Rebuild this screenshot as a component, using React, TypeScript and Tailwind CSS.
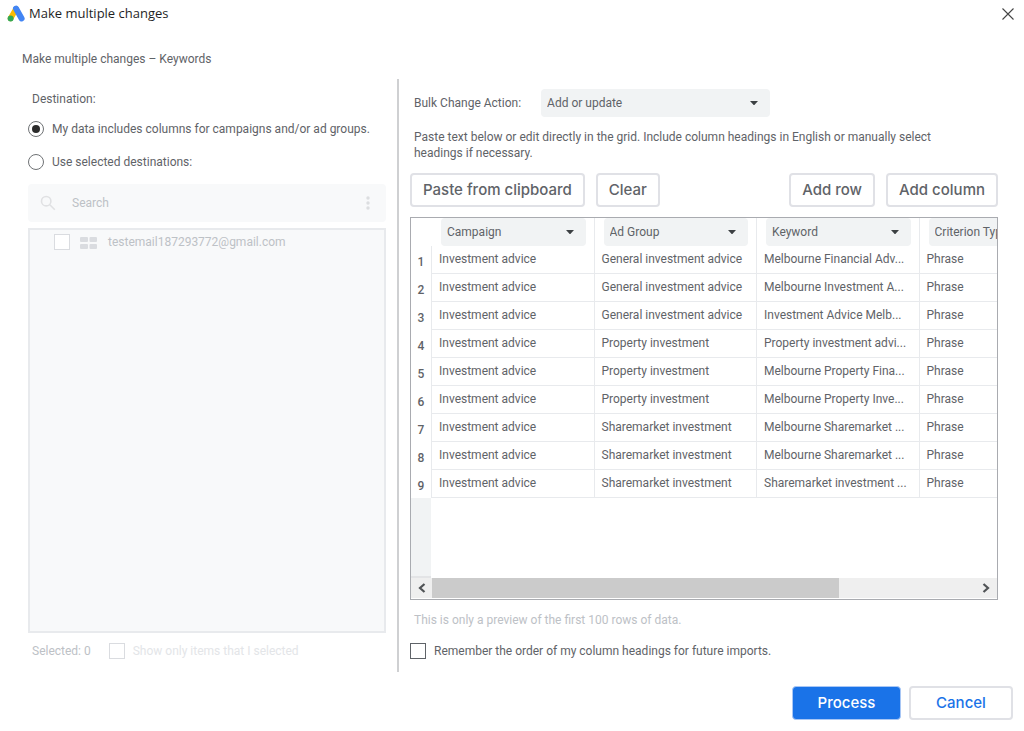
import { useState } from "react";

const COLUMNS = ["Campaign", "Ad Group", "Keyword", "Criterion Type"];

const ROWS = [
  ["Investment advice", "General investment advice", "Melbourne Financial Adv...", "Phrase"],
  ["Investment advice", "General investment advice", "Melbourne Investment A...", "Phrase"],
  ["Investment advice", "General investment advice", "Investment Advice Melb...", "Phrase"],
  ["Investment advice", "Property investment", "Property investment advi...", "Phrase"],
  ["Investment advice", "Property investment", "Melbourne Property Fina...", "Phrase"],
  ["Investment advice", "Property investment", "Melbourne Property Inve...", "Phrase"],
  ["Investment advice", "Sharemarket investment", "Melbourne Sharemarket ...", "Phrase"],
  ["Investment advice", "Sharemarket investment", "Melbourne Sharemarket ...", "Phrase"],
  ["Investment advice", "Sharemarket investment", "Sharemarket investment ...", "Phrase"],
];

const outlineButton =
  "h-[34px] rounded border-2 border-[#e0e1e6] bg-white px-[11px] font-[Inter,sans-serif] text-[15px] font-medium text-[#5f6368]";

const checkbox = "size-4 shrink-0 appearance-none border bg-white checked:bg-[#1a73e8]";

function AdsLogo() {
  return (
    <svg className="h-[18px] w-[18px]" viewBox="0 0 18 18" aria-hidden="true">
      <path d="M9 4 L3.6 13.4" stroke="#fbbc04" strokeWidth="5.6" strokeLinecap="round" />
      <path d="M9 3.6 L14.6 13.4" stroke="#4285f4" strokeWidth="6" strokeLinecap="round" />
      <circle cx="3.6" cy="13.6" r="3" fill="#34a853" />
    </svg>
  );
}

function Select({ label, id, options }: { label?: string; id?: string; options: string[] }) {
  return (
    <div className="relative w-full">
      <select
        id={id}
        aria-label={label}
        className="block h-7 w-full appearance-none rounded bg-[#f1f3f4] pl-1.5 pr-6 text-[#5f6368]"
      >
        {options.map((o) => (
          <option key={o}>{o}</option>
        ))}
      </select>
      <svg
        className="pointer-events-none absolute right-3 top-3 h-1 w-2"
        viewBox="0 0 8 4"
        fill="#3c4043"
        aria-hidden="true"
      >
        <path d="M0 0h8L4 4.4z" />
      </svg>
    </div>
  );
}

function Destination() {
  const [mode, setMode] = useState("data");
  const radio =
    "flex size-4 shrink-0 appearance-none items-center justify-center rounded-full border border-[#6f7275] bg-white before:size-2 before:rounded-full checked:before:bg-[#2b2b2b]";

  return (
    <section className="flex min-w-0 flex-col border-r-2 border-[#cfd0d2] pl-7 pr-[11px] pt-[10px] pb-[11px]">
      <h2 className="pl-1 leading-5">Destination:</h2>
      <label className="mt-[10px] flex items-center gap-2 whitespace-nowrap leading-5">
        <input
          type="radio"
          name="destination"
          className={radio}
          checked={mode === "data"}
          onChange={() => setMode("data")}
        />
        My data includes columns for campaigns and/or ad groups.
      </label>
      <label className="mt-[13px] flex items-center gap-2 leading-5">
        <input
          type="radio"
          name="destination"
          className={radio}
          checked={mode === "selected"}
          onChange={() => setMode("selected")}
        />
        Use selected destinations:
      </label>

      <div className="mt-3 flex h-[38px] items-center rounded bg-[#f8f9fa] pl-3 pr-4">
        <svg className="size-4 shrink-0" viewBox="0 0 16 16" fill="none" stroke="#e0e1e3" strokeWidth="1.6" aria-hidden="true">
          <circle cx="6.2" cy="6.2" r="4.7" />
          <path d="M9.8 9.8l5 5" />
        </svg>
        <input
          type="text"
          aria-label="Search"
          placeholder="Search"
          disabled
          className="ml-4 min-w-0 flex-1 bg-transparent placeholder:text-[#bdc1c6]"
        />
        <button type="button" aria-label="More options" disabled>
          <svg className="h-4 w-1" viewBox="0 0 4 16" fill="#dcdee0">
            <circle cx="2" cy="3" r="1.7" />
            <circle cx="2" cy="8" r="1.7" />
            <circle cx="2" cy="13" r="1.7" />
          </svg>
        </button>
      </div>

      <div className="mt-1.5 flex-1 border-2 border-[#e8eaed] bg-[#f8f9fa] pl-6 pt-1">
        <label className="flex items-center text-[#bdc1c6] leading-4">
          <input type="checkbox" disabled className={`${checkbox} border-[#dadce0]`} />
          <svg className="ml-[10px] mt-0.5 h-3 w-[17px]" viewBox="0 0 17 12" fill="#dadce0" aria-hidden="true">
            <rect width="8" height="5" rx="1" />
            <rect x="9.5" width="7.5" height="5" rx="1" />
            <rect y="7" width="8" height="5" rx="1" />
            <rect x="9.5" y="7" width="7.5" height="5" rx="1" />
          </svg>
          <span className="ml-[11px]">testemail187293772@gmail.com</span>
        </label>
      </div>

      <div className="mt-2 flex items-center pl-1 leading-5 text-[#bdc1c6]">
        <span>Selected: 0</span>
        <label className="ml-[18px] flex items-center gap-2 text-[#e3e5e8]">
          <input type="checkbox" disabled className={`${checkbox} border-[#dadce0]`} />
          Show only items that I selected
        </label>
      </div>
    </section>
  );
}

function Grid() {
  return (
    <div className="mt-[10px] flex flex-1 flex-col overflow-hidden border border-[#a9abb0]">
      <div className="overflow-hidden">
        <table className="w-[671px] table-fixed border-separate border-spacing-0">
          <thead>
            <tr className="h-7">
              <td className="w-[21px] p-0" />
              {COLUMNS.map((c) => (
                <th key={c} className="border-r border-[#e8eaed] p-0 pl-[9px] pr-2 font-normal">
                  <Select label={`Heading ${c}`} options={[c]} />
                </th>
              ))}
            </tr>
          </thead>
          <tbody>
            {ROWS.map((row, i) => (
              <tr key={i} className="h-7">
                <th className="border-r border-[#e8eaed] p-0 pt-1 text-center font-medium leading-4">
                  {i + 1}
                </th>
                {row.map((cell, j) => (
                  <td
                    key={j}
                    className="whitespace-nowrap border-b border-r border-[#e8eaed] p-0 pb-0.5 pl-[7px] leading-4"
                  >
                    {cell}
                  </td>
                ))}
              </tr>
            ))}
          </tbody>
        </table>
      </div>
      <div className="flex-1">
        <div className="h-full w-5 border-b-2 border-[#e3e4e6] bg-[#f1f3f4]" />
      </div>
      <div className="mb-px flex h-5 items-stretch bg-[#efefef]">
        <button type="button" aria-label="Scroll left" className="flex w-[21px] items-center justify-center">
          <svg className="h-[10px] w-2" viewBox="0 0 8 10" fill="none" stroke="#505356" strokeWidth="2.2">
            <path d="M6.5 1L2 5l4.5 4" />
          </svg>
        </button>
        <div className="flex-1">
          <div className="h-full w-3/4 bg-[#cbcbcb]" />
        </div>
        <button type="button" aria-label="Scroll right" className="flex w-[23px] items-center justify-center">
          <svg className="h-[10px] w-2" viewBox="0 0 8 10" fill="none" stroke="#505356" strokeWidth="2.2">
            <path d="M1.5 1L6 5l-4.5 4" />
          </svg>
        </button>
      </div>
    </div>
  );
}

function BulkChange() {
  return (
    <section className="flex min-w-0 flex-col pb-[11px] pl-[11px] pr-[26px] pt-[10px]">
      <div className="flex items-center gap-5 pl-1">
        <label htmlFor="bulk-action" className="shrink-0">
          Bulk Change Action:
        </label>
        <div className="w-[229px]">
          <Select id="bulk-action" options={["Add or update", "Remove"]} />
        </div>
      </div>
      <p className="mt-3 max-w-[540px] pl-1 leading-4">
        Paste text below or edit directly in the grid. Include column headings in English or manually
        select headings if necessary.
      </p>
      <div className="mt-3 flex gap-[11px]">
        <button type="button" className={outlineButton}>
          Paste from clipboard
        </button>
        <button type="button" className={outlineButton}>
          Clear
        </button>
        <button type="button" className={`${outlineButton} ml-auto`}>
          Add row
        </button>
        <button type="button" className={outlineButton}>
          Add column
        </button>
      </div>
      <Grid />
      <p className="mt-3 pl-1 leading-4 text-[#bdc1c6]">
        This is only a preview of the first 100 rows of data.
      </p>
      <label className="mt-[13px] flex items-center gap-2 leading-5">
        <input type="checkbox" className={`${checkbox} border-[#5f6368]`} />
        Remember the order of my column headings for future imports.
      </label>
    </section>
  );
}

export default function App() {
  return (
    <div className="flex min-h-screen flex-col bg-white font-[Roboto,sans-serif] text-xs text-[#5f6368]">
      <header className="flex h-7 items-center justify-between pl-[7px] pr-[10px]">
        <div className="flex items-center gap-1">
          <AdsLogo />
          <h1 className="font-['Open_Sans',sans-serif] text-[13px] text-[#1f1f1f]">
            Make multiple changes
          </h1>
        </div>
        <button type="button" aria-label="Close">
          <svg className="size-3" viewBox="0 0 12 12" stroke="#444" strokeWidth="1.1">
            <path d="M0.5 0.5l11 11M11.5 0.5l-11 11" />
          </svg>
        </button>
      </header>
      <p className="px-[22px] pb-[10px] pt-[21px] leading-5">Make multiple changes – Keywords</p>
      <main className="grid flex-1 grid-cols-[399fr_625fr]">
        <Destination />
        <BulkChange />
      </main>
      <footer className="flex justify-end gap-2 pb-[11px] pr-[11px] pt-[14px] font-[Inter,sans-serif] text-[15px] font-medium">
        <button
          type="button"
          className="h-[34px] w-[109px] rounded border border-[#a9c7f5] bg-[#1a73e8] text-white"
        >
          Process
        </button>
        <button
          type="button"
          className="h-[34px] w-[104px] rounded border-2 border-[#e0e1e6] bg-white text-[#1a73e8]"
        >
          Cancel
        </button>
      </footer>
    </div>
  );
}
